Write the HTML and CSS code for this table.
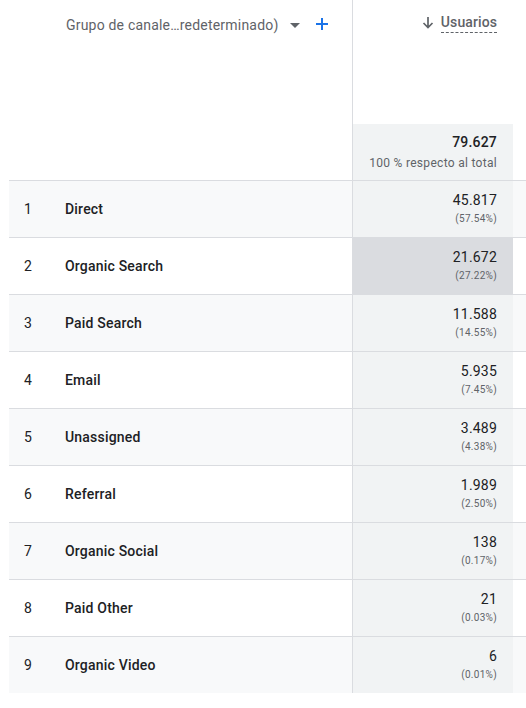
FILE: index.html
```html
<!DOCTYPE html>
<html lang="es">
<head>
<meta charset="utf-8">
<link rel="stylesheet" href="styles.css">
</head>
<body>
<div class="report">
  <div class="row head">
    <div class="dim-head">
      <span class="dim-title">Grupo de canale…redeterminado)</span>
      <svg class="caret" width="10" height="5" viewBox="0 0 10 5"><path d="M0 0h10L5 5z" fill="#5f6368"/></svg>
      <svg class="plus" width="14" height="14" viewBox="0 0 14 14"><path d="M7 1v12M1 7h12" stroke="#1a73e8" stroke-width="2"/></svg>
    </div>
    <div class="val-head">
      <svg class="arrow" width="12" height="13" viewBox="0 0 12 13"><path d="M6 1v10.5M1.5 7l4.5 4.5 4.5-4.5" stroke="#5f6368" stroke-width="1.7" fill="none"/></svg>
      <span class="metric">Usuarios</span>
    </div>
    <div class="strip"></div>
  </div>
  <div class="row total">
    <div class="dim"></div>
    <div class="val">
      <div class="num strong">79.627</div>
      <div class="sub">100 % respecto al total</div>
    </div>
    <div class="strip"></div>
  </div>

  <div class="row data odd"><div class="dim"><span class="idx">1</span><span class="name">Direct</span></div><div class="val"><div class="num">45.817</div><div class="pct">(57.54%)</div></div><div class="strip"></div></div>
  <div class="row data"><div class="dim"><span class="idx">2</span><span class="name">Organic Search</span></div><div class="val hover"><div class="num">21.672</div><div class="pct">(27.22%)</div></div><div class="strip"></div></div>
  <div class="row data odd"><div class="dim"><span class="idx">3</span><span class="name">Paid Search</span></div><div class="val"><div class="num">11.588</div><div class="pct">(14.55%)</div></div><div class="strip"></div></div>
  <div class="row data"><div class="dim"><span class="idx">4</span><span class="name">Email</span></div><div class="val"><div class="num">5.935</div><div class="pct">(7.45%)</div></div><div class="strip"></div></div>
  <div class="row data odd"><div class="dim"><span class="idx">5</span><span class="name">Unassigned</span></div><div class="val"><div class="num">3.489</div><div class="pct">(4.38%)</div></div><div class="strip"></div></div>
  <div class="row data"><div class="dim"><span class="idx">6</span><span class="name">Referral</span></div><div class="val"><div class="num">1.989</div><div class="pct">(2.50%)</div></div><div class="strip"></div></div>
  <div class="row data odd"><div class="dim"><span class="idx">7</span><span class="name">Organic Social</span></div><div class="val"><div class="num">138</div><div class="pct">(0.17%)</div></div><div class="strip"></div></div>
  <div class="row data"><div class="dim"><span class="idx">8</span><span class="name">Paid Other</span></div><div class="val"><div class="num">21</div><div class="pct">(0.03%)</div></div><div class="strip"></div></div>
  <div class="row data odd"><div class="dim"><span class="idx">9</span><span class="name">Organic Video</span></div><div class="val"><div class="num">6</div><div class="pct">(0.01%)</div></div><div class="strip"></div></div>
</div>
</body>
</html>
```

FILE: styles.css
```css
* { box-sizing: border-box; }
html, body { margin: 0; padding: 0; background: #fff; }
body {
  font-family: Roboto, "Liberation Sans", Arial, sans-serif;
  color: #202124;
  -webkit-font-smoothing: antialiased;
}
.report {
  margin-left: 9px;
  width: 517px;
}
.row {
  display: grid;
  grid-template-columns: 343px 161px 13px;
}
.head { height: 124px; }
.dim-head {
  display: flex;
  align-items: center;
  height: 20px;
  margin-top: 15px;
  padding-left: 57px;
  font-size: 14px;
  line-height: 20px;
  color: #5f6368;
}
.dim-title { letter-spacing: 0.2px; }
.caret { margin-left: 12px; }
.plus { margin-left: 15px; margin-top: -2px; }
.val-head {
  border-left: 1px solid #dadce0;
  display: flex;
  justify-content: flex-end;
  align-items: flex-start;
  padding: 13px 16px 0 0;
}
.arrow { margin-top: 3px; margin-right: 7px; }
.metric {
  font-size: 14px;
  line-height: 18px;
  font-weight: 500;
  color: #5f6368;
  border-bottom: 1px dashed #5f6368;
  padding-bottom: 1px;
  letter-spacing: 0.1px;
}
.total { height: 56px; }
.val {
  border-left: 1px solid #dadce0;
  background: #f1f3f4;
  text-align: right;
  padding: 8px 16px 0 0;
}
.num { font-size: 14px; line-height: 20px; letter-spacing: 0.2px; }
.strong { font-weight: 500; }
.sub { font-size: 12px; line-height: 16px; color: #5f6368; margin-top: 3px; letter-spacing: 0.3px; }
.data {
  height: 57px;
  border-top: 1px solid #dadce0;
}
.data.odd { background: #f8f9fa; }
.data .val { padding-top: 9px; }
.val.hover { background: #dadce0; }
.pct { font-size: 10px; line-height: 14px; color: #5f6368; margin-top: 2px; letter-spacing: 0.3px; }
.dim {
  display: flex;
  align-items: center;
  font-size: 14px;
}
.idx { width: 56px; padding-left: 15px; color: #202124; }
.name { font-weight: 500; letter-spacing: 0.2px; }
```
